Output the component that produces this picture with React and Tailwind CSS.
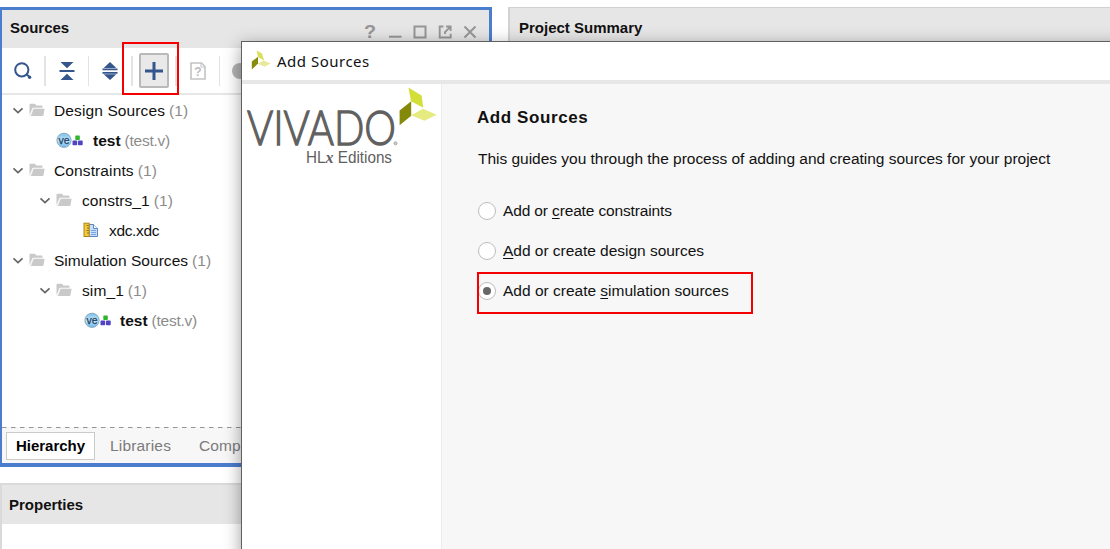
import React from "react";

function Chevron() {
  return (
    <svg width="12" height="12" viewBox="0 0 12 12" className="shrink-0" fill="none" stroke="#666" strokeWidth="1.7">
      <path d="M1.5 4.3 6 8.6l4.5-4.3" />
    </svg>
  );
}

function Folder() {
  return (
    <svg width="16" height="14" viewBox="0 0 16 14" className="shrink-0" fill="#c9c9c9">
      <path d="M0.5 12.4V1.5Q.5.7 1.3.7H6l1.3 1.8h5.4q.8 0 .8.8v1.5H4.3Q3.5 4.8 3.2 5.6Z" />
      <path d="M4.7 5.8H15.6L14.5 12.2Q14.3 13 13.5 13H1.5Z" />
      <path d="M2 12.2 4.2 5.4H14" fill="none" stroke="#eee" strokeWidth=".8" />
    </svg>
  );
}

function VerilogIcon() {
  return (
    <svg width="28" height="16" viewBox="0 0 28 16" className="shrink-0">
      <defs>
        <linearGradient id="orb" x1="0" y1="0" x2="0" y2="1">
          <stop offset="0" stopColor="#79c0ea" />
          <stop offset=".5" stopColor="#c3e3f6" />
          <stop offset="1" stopColor="#6db9ec" />
        </linearGradient>
      </defs>
      <circle cx="8" cy="8.3" r="7.1" fill="url(#orb)" stroke="#83a9c2" />
      <text x="8" y="11.6" textAnchor="middle" fontSize="10.5" fontFamily="Liberation Sans, sans-serif" fill="#1d4263" stroke="#1d4263" strokeWidth=".25">ve</text>
      <rect x="19.3" y="3.4" width="4.5" height="4.5" rx=".6" fill="#2fb52f" />
      <rect x="16.5" y="8.6" width="4.7" height="4.6" rx=".8" fill="#5144c4" />
      <rect x="22" y="8.6" width="4.7" height="4.6" rx=".8" fill="#5144c4" />
    </svg>
  );
}

function XdcIcon() {
  return (
    <svg width="16" height="16" viewBox="0 0 16 16" className="shrink-0">
      <path d="M6 2.5h4.5l4 4v8H6Z" fill="#c9e0fb" stroke="#5a87c5" />
      <path d="M10.5 2.5v4h4" fill="#fff" stroke="#5a87c5" />
      <path d="M8 8.5h5M8 10.5h5M8 12.5h5" stroke="#6d9be0" strokeWidth=".9" />
      <rect x="1" y="1.2" width="5.2" height="13.3" fill="#f4c938" stroke="#ae851f" />
      <path d="M3.5 3.5h2.3M4 6h2M3.5 8.5h2.3M4 11h2" stroke="#8b681c" strokeWidth=".9" />
    </svg>
  );
}

function TitleLeaves() {
  return (
    <svg width="20" height="20" viewBox="0 0 20 20" className="mt-[-2px]">
      <path d="M5.6.5 11 3.4 13.2 10.8 7 7Z" fill="#dbe05c" />
      <path d="M7 6.8v6.8L.8 19.6V11.6Z" fill="#888c0c" />
      <path d="M7 13.8 12.6 10.6 19.8 13.6 13.5 16.8Z" fill="#e6ea9a" />
    </svg>
  );
}

function LogoLeaves() {
  return (
    <svg width="38" height="39" viewBox="0 0 38 39" className="absolute left-[157px] top-[3px]">
      <path d="M9.4.5 22.6 8.6 24.3 20.8 12 14.2Z" fill="#d3df38" />
      <path d="M12.2 14.2V28.8L.6 38.2V23.4Z" fill="#858909" />
      <path d="M12.2 28.3 24 21.8 37.7 27.7 25.4 33.8Z" fill="#e5eb7f" />
    </svg>
  );
}

function Separator() {
  return <div className="h-[30px] w-[1.7px] shrink-0 bg-[#e3e3e3]" />;
}

function TreeRow({ indent, icon, label, note, labelClass, noteClass }) {
  return (
    <div className={`flex h-[30px] items-center whitespace-pre ${indent}`}>
      {icon}
      <span className={`pt-[1px] ${labelClass}`}>{label}</span>
      {note && <span className={`ml-[4px] pt-[1px] text-[#8c8c8c] ${noteClass || "tracking-[0.1px]"}`}>{note}</span>}
    </div>
  );
}

function Branch() {
  return (
    <span className="mr-[9px] flex items-center gap-[5px]">
      <Chevron />
      <Folder />
    </span>
  );
}

function WindowButtons() {
  return (
    <div className="mr-[11px] flex items-center gap-[9px] pt-[5px]">
      <span className="flex w-[16px] scale-x-110 justify-center text-[18px] leading-[16px] font-bold text-[#969696]">?</span>
      <svg width="16" height="16" viewBox="0 0 16 16"><path d="M2 12.7h12.5" stroke="#969696" strokeWidth="2" /></svg>
      <svg width="16" height="16" viewBox="0 0 16 16"><path d="M2.5 2.5h11v11h-11z" fill="none" stroke="#969696" strokeWidth="2" /></svg>
      <svg width="16" height="16" viewBox="0 0 16 16" fill="none" stroke="#969696" strokeWidth="1.9">
        <path d="M6.5 2.5H2.7v11h11V9.8M9 2.5h4.6v4.6M13.3 2.8 8 8.1v2" />
      </svg>
      <svg width="16" height="16" viewBox="0 0 16 16"><path d="m2.5 2.5 11 11M13.5 2.5l-11 11" stroke="#969696" strokeWidth="2" /></svg>
    </div>
  );
}

function Toolbar() {
  return (
    <div className="flex h-[47px] shrink-0 items-center border-b-2 border-[#e6e6e6]">
      <div className="flex w-[42px] shrink-0 justify-center">
        <svg width="20" height="20" viewBox="0 0 20 20" fill="none" stroke="#35568d">
          <circle cx="8.8" cy="8.8" r="6.6" strokeWidth="2" />
          <path d="m13.8 13.4 2.2 2" strokeWidth="2" />
          <circle cx="16.6" cy="16.2" r="1.7" fill="#35568d" stroke="none" />
        </svg>
      </div>
      <Separator />
      <div className="flex w-[42px] shrink-0 justify-center">
        <svg width="16" height="18" viewBox="0 0 16 18" fill="#35568d">
          <path d="M1.5 0h13L8 6.2ZM0.5 8h15v2H.5ZM8 11.8l6.5 6.2h-13Z" />
        </svg>
      </div>
      <Separator />
      <div className="flex w-[42px] shrink-0 justify-center">
        <svg width="16" height="18" viewBox="0 0 16 18" fill="#35568d">
          <path d="M8 0l6.3 6H1.7ZM.5 6.5h15v1.8H.5ZM.5 10h15v1.8H.5ZM1.7 12.3h12.6L8 18Z" />
        </svg>
      </div>
      <Separator />
      <div className="flex w-[42px] shrink-0 justify-center">
        <div className="flex h-[35px] w-[30px] items-center justify-center rounded-[2px] border-2 border-[#b9b9b9] bg-[#e9e9e9]">
          <svg width="18" height="18" viewBox="0 0 18 18" className="shrink-0"><path d="M9 0v18M0 9h18" stroke="#35568d" strokeWidth="3" /></svg>
        </div>
      </div>
      <Separator />
      <div className="flex w-[42px] shrink-0 justify-center">
        <svg width="16" height="18" viewBox="0 0 16 18">
          <path d="M1 1h10.5L15 4.5V17H1Z" fill="#fff" stroke="#c4c4c4" strokeWidth="1.6" />
          <path d="M11 1v4h4" fill="none" stroke="#c4c4c4" />
          <text x="8" y="14" textAnchor="middle" fontSize="12" fontWeight="bold" fontFamily="Liberation Sans, sans-serif" fill="#bbb">?</text>
        </svg>
      </div>
      <Separator />
      <div className="ml-[12px] h-[16px] w-[16px] shrink-0 rounded-full bg-[#b4b4b4]" />
    </div>
  );
}

function SourcesPanel() {
  return (
    <section className="flex h-[460px] w-[492px] shrink-0 flex-col border-t-[3px] border-r-[3px] border-b-[4px] border-l-2 border-[#4a7dce] bg-white">
      <header className="flex h-[38px] shrink-0 items-center justify-between bg-[#e6e6e6] pl-[8px]">
        <h2 className="pb-[2px] font-bold">Sources</h2>
        <WindowButtons />
      </header>
      <Toolbar />
      <div className="flex flex-1 flex-col text-[15.5px]">
        <TreeRow indent="pl-[10px]" icon={<Branch />} label="Design Sources" note="(1)" labelClass="tracking-[0.12px]" />
        <TreeRow indent="pl-[54px]" icon={<VerilogIcon />} label="test" note="(test.v)" labelClass="ml-[9px] font-bold" noteClass="tracking-[-0.25px]" />
        <TreeRow indent="pl-[10px]" icon={<Branch />} label="Constraints" note="(1)" labelClass="tracking-[0.12px]" />
        <TreeRow indent="pl-[37px]" icon={<Branch />} label="constrs_1" note="(1)" labelClass="ml-[1px] tracking-[0.05px]" />
        <TreeRow indent="pl-[81px]" icon={<XdcIcon />} label="xdc.xdc" labelClass="ml-[10px] tracking-[-0.35px]" />
        <TreeRow indent="pl-[10px]" icon={<Branch />} label="Simulation Sources" note="(1)" labelClass="tracking-[0.03px]" />
        <TreeRow indent="pl-[37px]" icon={<Branch />} label="sim_1" note="(1)" labelClass="ml-[1px] tracking-[0.1px]" />
        <TreeRow indent="pl-[82px]" icon={<VerilogIcon />} label="test" note="(test.v)" labelClass="ml-[8px] font-bold" noteClass="tracking-[-0.25px]" />
      </div>
      <svg width="487" height="2" className="shrink-0 bg-[#f7f7f7]"><path d="M0 .5h487" stroke="#959595" strokeDasharray="4.5 4.5" /></svg>
      <div className="flex h-[34px] shrink-0 items-center bg-[#f7f7f7] pl-[4px] text-[#7b7b7b]">
        <span className="flex h-[28px] w-[89px] items-center justify-center border border-[#cacaca] bg-white font-bold text-black">Hierarchy</span>
        <span className="ml-[15px] text-[15.5px] tracking-[0.18px]">Libraries</span>
        <span className="ml-[28px] text-[15.5px] tracking-[0.1px]">Compile Order</span>
      </div>
    </section>
  );
}

function RadioOption({ before, mnemonic, after, selected, className }) {
  return (
    <label className="flex h-[40px] items-center text-[15.5px] whitespace-pre">
      <span className="mr-[7px] flex h-[18px] w-[18px] items-center justify-center rounded-full border-[1.5px] border-[#bdbdbd] bg-white">
        {selected && <span className="h-[8px] w-[8px] rounded-full bg-[#686868]" />}
      </span>
      <span className={className}>
        {before}<span className="underline underline-offset-2">{mnemonic}</span>{after}
      </span>
    </label>
  );
}

function AddSourcesDialog() {
  return (
    <div className="absolute top-[41px] left-[241px] flex h-[540px] w-[900px] flex-col border border-[#606060] bg-white shadow-[0_4px_16px_rgba(0,0,0,0.38)]">
      <div className="flex h-[38px] shrink-0 items-center pl-[9px]">
        <TitleLeaves />
        <span className="ml-[6px] font-['Noto_Sans',sans-serif] text-[15px] tracking-[0.5px]">Add Sources</span>
      </div>
      <div className="h-[4px] shrink-0 bg-[#e7e7e7]" />
      <div className="flex flex-1">
        <aside className="relative w-[200px] border-r border-[#ececec] bg-white">
          <svg width="199" height="85" viewBox="0 0 199 85" className="block">
            <text x="5" y="61" textLength="149" lengthAdjust="spacingAndGlyphs" fontSize="47" fontWeight="300" fontFamily="Lato, Open Sans, sans-serif" fill="#606060" stroke="#606060" strokeWidth="1.3">VIVADO</text>
            <text x="64" y="79" textLength="86" lengthAdjust="spacingAndGlyphs" fontSize="16" fontFamily="Liberation Sans, sans-serif" fill="#606060">HL<tspan fontFamily="Liberation Serif, serif" fontStyle="italic" fontWeight="bold" fontSize="17">x</tspan> Editions</text>
            <circle cx="153.5" cy="59.3" r="1.5" fill="#ccc" stroke="#999" strokeWidth=".8" />
          </svg>
          <LogoLeaves />
        </aside>
        <main className="flex flex-1 flex-col bg-[#f7f7f7] pt-[22px] pl-[35px]">
          <h1 className="h-[24px] text-[17px] leading-[24px] font-bold tracking-[0.58px]">Add Sources</h1>
          <p className="mt-[18px] h-[20px] pl-[1px] text-[15.5px] leading-[21px] tracking-[-0.02px] whitespace-pre">This guides you through the process of adding and creating sources for your project</p>
          <div className="mt-[23px] flex flex-col pl-[1px]">
            <RadioOption before="Add or " mnemonic="c" after="reate constraints" className="tracking-[-0.14px]" />
            <RadioOption before="" mnemonic="A" after="dd or create design sources" className="tracking-[-0.02px]" />
            <RadioOption before="Add or create " mnemonic="s" after="imulation sources" selected className="tracking-[0px]" />
          </div>
        </main>
      </div>
    </div>
  );
}

export default function App() {
  return (
    <div className="relative h-[549px] w-[1110px] overflow-hidden bg-white font-['Liberation_Sans',Arial,sans-serif] text-[15px] leading-[20px] text-[#111]">
      <div className="flex h-[549px] gap-[16px] pt-[7px]">
        <div className="flex w-[492px] shrink-0 flex-col gap-[16px]">
          <SourcesPanel />
          <section className="flex h-[80px] shrink-0 flex-col border-t-2 border-l-2 border-[#dadada] bg-white">
            <header className="flex h-[39px] items-center bg-[#e6e6e6] pl-[7px] font-bold">Properties</header>
          </section>
        </div>
        <section className="flex-1 border-t border-l-2 border-[#d2d2d2]">
          <header className="flex h-[40px] items-center bg-[#e6e6e6] pl-[9px] font-bold">Project Summary</header>
        </section>
      </div>
      <AddSourcesDialog />
      <div className="absolute top-[42px] left-[122px] h-[53px] w-[57px] border-2 border-[#f40000]" />
      <div className="absolute top-[272px] left-[477px] h-[42px] w-[276px] border-2 border-[#f40000]" />
    </div>
  );
}
